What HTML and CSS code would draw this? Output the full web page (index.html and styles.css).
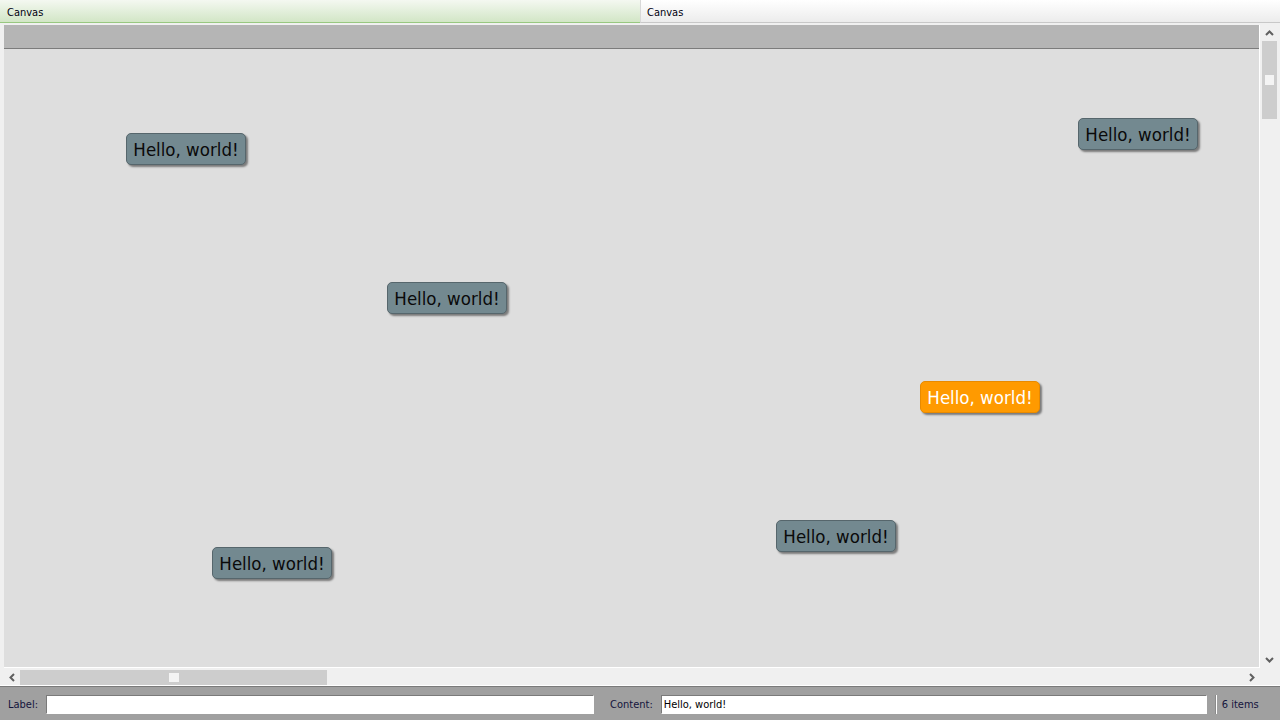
FILE: index.html
```html
<!DOCTYPE html>
<html>
<head>
<meta charset="utf-8">
<link rel="stylesheet" href="styles.css">
</head>
<body>
<div class="app">
  <div class="tabs">
    <div class="tab tab-active">Canvas</div>
    <div class="tab">Canvas</div>
  </div>
  <div class="panel">
    <div class="view">
      <div class="canvas-col">
        <div class="header-band"></div>
        <div class="canvas">
          <div class="node" style="left:122px;top:84px">Hello, world!</div>
          <div class="node" style="left:1074px;top:69px">Hello, world!</div>
          <div class="node" style="left:383px;top:233px">Hello, world!</div>
          <div class="node node-selected" style="left:916px;top:332px">Hello, world!</div>
          <div class="node" style="left:772px;top:471px">Hello, world!</div>
          <div class="node" style="left:208px;top:498px">Hello, world!</div>
        </div>
      </div>
      <div class="vscroll">
        <div class="arrow arrow-up">
          <svg width="9" height="6" viewBox="0 0 9 6"><polyline points="1,5 4.5,1.5 8,5" fill="none" stroke="#606060" stroke-width="2"/></svg>
        </div>
        <div class="vtrack">
          <div class="vthumb"><div class="grip"></div></div>
        </div>
        <div class="arrow arrow-down">
          <svg width="9" height="6" viewBox="0 0 9 6"><polyline points="1,1 4.5,4.5 8,1" fill="none" stroke="#606060" stroke-width="2"/></svg>
        </div>
      </div>
      <div class="hscroll">
        <div class="arrow arrow-left">
          <svg width="6" height="9" viewBox="0 0 6 9"><polyline points="5,1 1.5,4.5 5,8" fill="none" stroke="#606060" stroke-width="2"/></svg>
        </div>
        <div class="htrack">
          <div class="hthumb"><div class="grip"></div></div>
        </div>
        <div class="arrow arrow-right">
          <svg width="6" height="9" viewBox="0 0 6 9"><polyline points="1,1 4.5,4.5 1,8" fill="none" stroke="#606060" stroke-width="2"/></svg>
        </div>
      </div>
      <div class="corner"></div>
    </div>
  </div>
  <div class="statusbar">
    <span class="status-label">Label:</span>
    <div class="field field-label"></div>
    <span class="status-label content-label">Content:</span>
    <div class="field field-content">Hello, world!</div>
    <div class="sep"></div>
    <span class="status-label">6 items</span>
  </div>
</div>
</body>
</html>
```

FILE: styles.css
```css
html, body {
  margin: 0;
  padding: 0;
}
body {
  width: 1280px;
  height: 720px;
  overflow: hidden;
  font-family: "DejaVu Sans Condensed", "DejaVu Sans", sans-serif;
  font-size: 11px;
  color: #101030;
  background: #f0f0f0;
}
.app {
  display: flex;
  flex-direction: column;
  width: 1280px;
  height: 720px;
}
.tabs {
  display: flex;
  height: 23px;
  flex: none;
}
.tab {
  flex: 1;
  box-sizing: border-box;
  padding: 6px 0 0 6px;
  background: linear-gradient(#ffffff, #ececec);
  border-bottom: 1px solid #c8c8c8;
  border-left: 1px solid #d8d8d8;
  color: #000010;
}
.tab-active {
  border-left: none;
  padding-left: 7px;
  background: linear-gradient(#f4f8f1, #d2e6c6);
  border-bottom: 1px solid #98c880;
}
.panel {
  flex: 1;
  min-height: 0;
  box-sizing: border-box;
  padding: 2px 3px 0 4px;
  background: #f0f0f0;
  border-bottom: 1px solid #ffffff;
}
.view {
  display: grid;
  grid-template-columns: 1256px 1fr;
  grid-template-rows: 1fr 17px;
  height: 100%;
}
.canvas-col {
  display: flex;
  flex-direction: column;
  border-right: 1px solid #ffffff;
  border-bottom: 1px solid #ffffff;
  min-height: 0;
}
.header-band {
  height: 23px;
  flex: none;
  background: #b5b5b5;
  border-bottom: 1px solid #7c7c7c;
}
.canvas {
  position: relative;
  flex: 1;
  background: #dedede;
  overflow: hidden;
}
.node {
  position: absolute;
  box-sizing: border-box;
  width: 120px;
  height: 32px;
  padding-top: 2px;
  border: 1px solid #56666c;
  border-radius: 5px;
  background: #738990;
  box-shadow: 2px 2px 2px rgba(0, 0, 0, 0.45);
  font-size: 18.5px;
  line-height: 28px;
  text-align: center;
  color: #0a0a0a;
  white-space: nowrap;
}
.node-selected {
  background: #ff9a00;
  border-color: #e88a00;
  color: #ffffff;
}
.vscroll {
  display: flex;
  flex-direction: column;
  align-items: center;
  background: #f0f0f0;
  padding-left: 1px;
  box-sizing: border-box;
}
.arrow {
  display: flex;
  align-items: center;
  justify-content: center;
  flex: none;
}
.arrow-up, .arrow-down {
  height: 16px;
  width: 15px;
}
.vtrack {
  flex: 1;
  width: 15px;
}
.vthumb {
  width: 15px;
  height: 78px;
  background: #cdcdcd;
  display: flex;
  align-items: center;
  justify-content: center;
}
.grip {
  width: 9px;
  height: 10px;
  background: #f4f4f4;
}
.hscroll {
  display: flex;
  align-items: center;
  background: #f0f0f0;
  padding-top: 1px;
  box-sizing: border-box;
}
.arrow-left, .arrow-right {
  width: 16px;
  height: 15px;
}
.htrack {
  flex: 1;
  height: 15px;
}
.hthumb {
  width: 307px;
  height: 15px;
  background: #cdcdcd;
  display: flex;
  align-items: center;
  justify-content: center;
}
.hthumb .grip {
  width: 10px;
  height: 9px;
}
.corner {
  background: #f0f0f0;
}
.statusbar {
  flex: none;
  height: 34px;
  box-sizing: border-box;
  display: flex;
  align-items: center;
  padding: 1px 0 0 8px;
  background: #a0a0a0;
  border-top: 1px solid #7a7a7a;
  gap: 8px;
}
.status-label {
  color: #14143c;
  white-space: nowrap;
}
.content-label {
  margin-left: 8px;
}
.field {
  flex: none;
  height: 19px;
  box-sizing: border-box;
  background: #ffffff;
  border: 1px solid #8a8a8a;
  border-color: #7a7a7a #ffffff #ffffff #7a7a7a;
  padding: 2px 0 0 2px;
  color: #000000;
  white-space: nowrap;
  overflow: hidden;
}
.field-label {
  width: 548px;
}
.field-content {
  width: 546px;
}
.sep {
  width: 2px;
  height: 19px;
  background: #ffffff;
  border-left: 1px solid #8a8a8a;
  box-sizing: border-box;
  margin-right: -3px;
}
```
